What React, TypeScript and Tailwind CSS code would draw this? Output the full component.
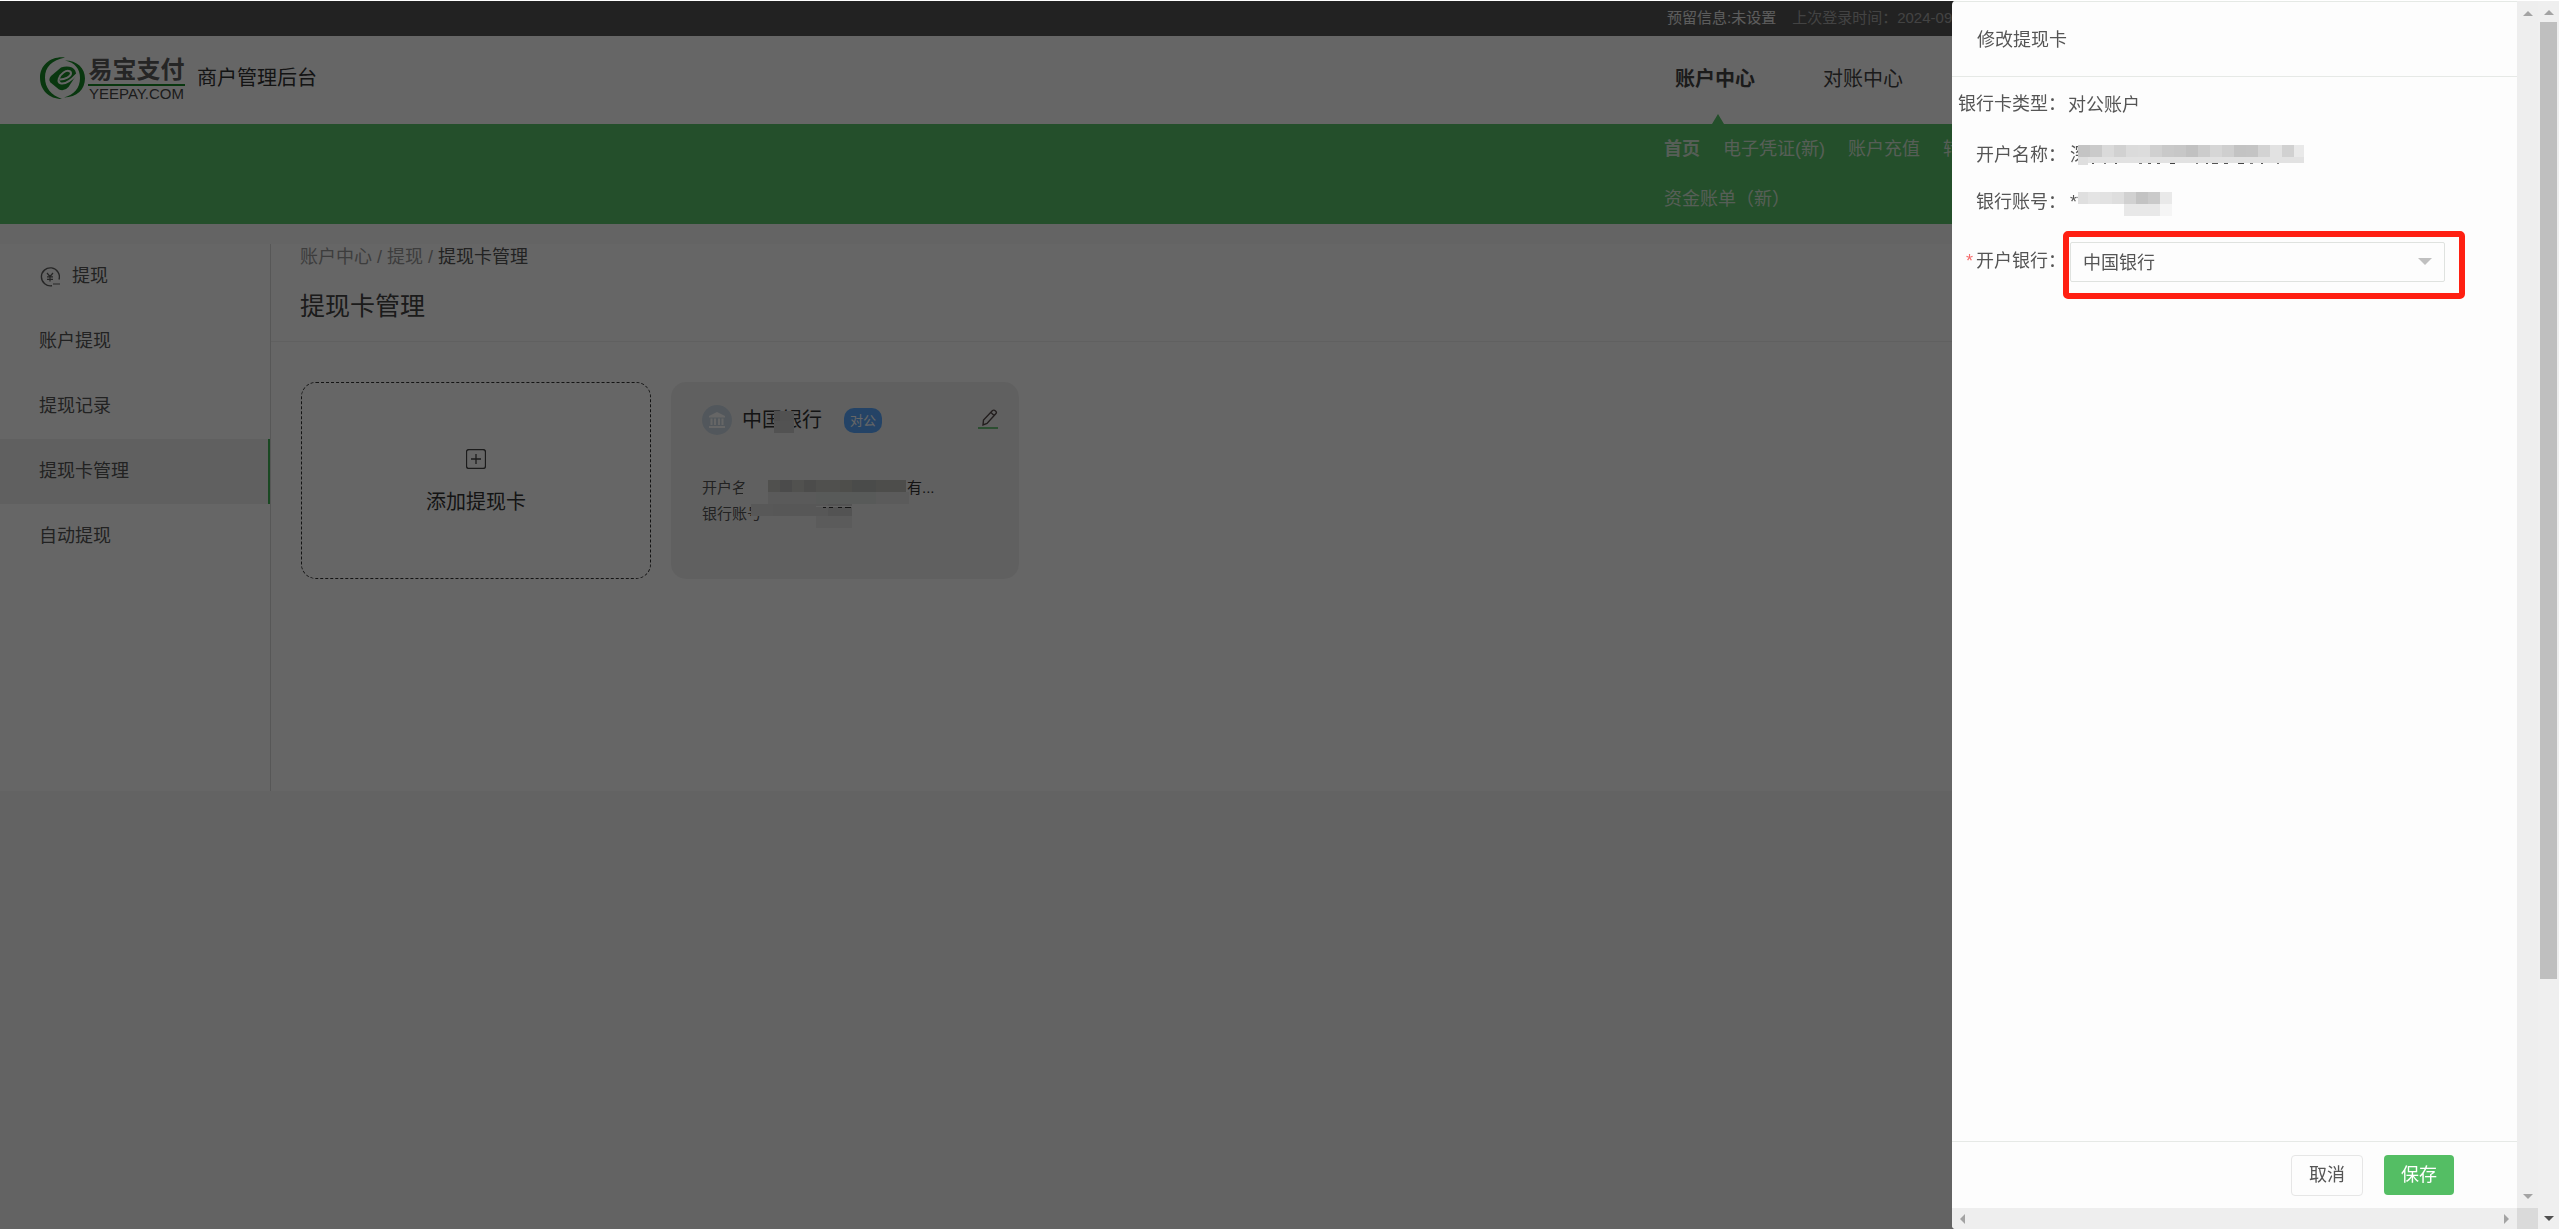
import { FC, ReactNode, useState } from "react";

type Cell = [x: number, y: number, w: number, h: number, fill: string];

const topNav = ["账户中心", "对账中心"];
const subNav = [["首页", "电子凭证(新)", "账户充值", "转"], ["资金账单（新）"]];
const sideNav = ["账户提现", "提现记录", "提现卡管理", "自动提现"];

const nameCells: Cell[] = [
  "#c4c4c4", "#cacaca", "#dadada", "#d1d1d1", "#dbdbdb", "#dcdcdc", "#d0d0d0", "#c9c9c9", "#c7c7c7", "#c1c1c1",
  "#cccccc", "#d6d6d6", "#cfcfcf", "#c3c3c3", "#c4c4c4", "#d3d3d3", "#e2e2e2", "#d1d1d1", "#e9e9e9",
].map((fill, i) => [i * 12, 0, 12, 12, fill]);

const nameShade: Cell[] = [
  [0, 12, 10, 8, "#dedede"], [10, 12, 216, 6, "#e2e2e2"],
  [14, 18, 2, 1, "#555"], [26, 18, 2, 1, "#777"], [37, 18, 2, 1, "#555"], [61, 18, 3, 1, "#777"],
  [70, 18, 3, 1, "#555"], [79, 18, 3, 1, "#555"], [92, 18, 5, 1, "#444"], [118, 18, 2, 1, "#777"],
  [128, 18, 2, 1, "#555"], [134, 18, 6, 1, "#555"], [146, 18, 4, 1, "#555"], [160, 18, 6, 1, "#444"],
  [172, 18, 3, 1, "#777"], [183, 18, 2, 1, "#555"], [199, 18, 2, 1, "#777"],
];

const accountCells: Cell[] = [
  ["#dfdfdf", 0], ["#e4e4e4", 10], ["#e2e2e2", 22], ["#dedede", 34], ["#d1d1d1", 46], ["#c3c3c3", 58], ["#cacaca", 70], ["#e9e9e9", 82],
].map(([fill, x]) => [x as number, 0, x === 0 ? 10 : 12, 12, fill as string]);

const accountShade: Cell[] = [
  [46, 12, 36, 12, "#e8e8e8"],
  [82, 12, 12, 12, "#f5f5f5"],
];

const cardCells: Cell[] = [
  [0, 6, 25, 18, "#f0f1f1"], [25, 0, 12, 12, "#c9c9c2"], [37, 0, 12, 12, "#bcbcbc"], [49, 0, 12, 12, "#cbcbc5"],
  [61, 0, 12, 12, "#bfbfbc"], [73, 0, 24, 12, "#c9c9c2"], [97, 0, 12, 12, "#c2c2bc"], [109, 0, 24, 12, "#babcba"],
  [133, 0, 30, 12, "#c0c0bc"], [25, 12, 48, 12, "#e2e2e2"], [73, 12, 60, 12, "#dde0de"], [133, 12, 33, 12, "#e3e3e3"],
  [8, 24, 22, 12, "#dcdcdc"], [30, 24, 60, 12, "#d9d9d9"], [85, 24, 24, 12, "#d0d0d0"], [73, 36, 36, 12, "#e4e4e4"],
  [73, 26, 36, 1, "#f2f2f2"], [80, 27, 3, 1, "#333"], [86, 27, 4, 1, "#333"], [95, 27, 4, 1, "#333"], [102, 27, 6, 1, "#333"],
];

const Mosaic: FC<{ cells: Cell[]; width: number; height: number; className: string }> = ({ cells, width, height, className }) => (
  <svg width={width} height={height} className={`absolute ${className}`} shapeRendering="crispEdges" aria-hidden>
    {cells.map(([x, y, w, h, fill], i) => (
      <rect key={i} x={x} y={y} width={w} height={h} fill={fill} />
    ))}
  </svg>
);

const Logo = () => (
  <div className="flex items-center gap-[3px]">
    <svg width="45" height="42" viewBox="0 0 45 42" aria-hidden>
      <path d="M25 0.5C11 -1 0 8 0 20.5C0 33 9 42 22 42C11 38 5 31 5 20.5C5 10 12 3 25 0.5Z" fill="#178a26" />
      <path d="M25 3.5C35 5.5 40 12 40 21C40 31 34 38 24 40.5C37 40.5 45 32 45 21.5C45 11 37 3.5 25 3.5Z" fill="#178a26" />
      <path d="M21 10.500Q27 8.500 32 10.500Q36.500 13 36 18.500L28.500 30Q24 35 19 32.500L10.500 25.500Q8 22.500 11 19Z" fill="#178a26" />
      <path d="M20 22.500C25 22.500 31 19.500 31 16.200C31 13.500 27 13 23.500 15.500C18.500 19 17 25 20.500 26.300C24.500 27.500 30 24.500 36.500 17.500" fill="none" stroke="#fff" strokeWidth="2" />
    </svg>
    <div className="flex w-[97px] flex-col">
      <span className="whitespace-nowrap text-center text-[24px] font-bold leading-[28px] text-[#5c5c5c]">易宝支付</span>
      <span className="h-[2px] bg-[#178a26]" />
      <span className="text-center text-[15px] leading-[15px] text-[#484848]">YEEPAY.COM</span>
    </div>
  </div>
);

const WithdrawIcon = () => (
  <svg width="20" height="20" viewBox="0 0 20 20" fill="none" stroke="#606060" strokeWidth="1.400" aria-hidden>
    <path d="M12 18.700A9 9 0 1 1 19 12.500" />
    <path d="M13 17H20M7 6L10 9.500L13 6M10 9.500V14.500M7 9.800H13M7 12.300H13" strokeWidth="1.200" />
  </svg>
);

const Triangle: FC<{ points: string; width: number; height: number; fill?: string }> = ({ points, width, height, fill = "#a3a3a3" }) => (
  <svg width={width} height={height} aria-hidden>
    <polygon points={points} fill={fill} />
  </svg>
);

const up = "5,0 10,5 0,5";
const down = "0,0 10,0 5,5";

const Page = () => (
  <div className="min-h-screen bg-[#f7f7f7]">
    <div className="h-px bg-white" />
    <div className="flex h-[35px] items-center justify-end bg-[#565656] text-[15px]">
      <div className="flex w-[892px] gap-4 whitespace-nowrap">
        <span className="text-[#e8e8e8]">预留信息:未设置</span>
        <span className="text-[#a8a8a8]">上次登录时间：2024-09</span>
      </div>
    </div>
    <header className="flex h-[88px] items-center justify-between bg-white pl-10">
      <div className="flex items-center gap-3 pb-1">
        <Logo />
        <span className="text-[20px] text-[#333]">商户管理后台</span>
      </div>
      <nav className="flex h-full w-[884px] gap-[68px] text-[20px] text-[#444]">
        {topNav.map((item, i) => (
          <a key={item} href="#" className="relative flex items-center pb-[2px]">
            <span className={i === 0 ? "font-bold" : ""}>{item}</span>
            {i === 0 && (
              <span className="absolute bottom-0 left-[37px] flex">
                <Triangle points="6,0 12,10 0,10" width={12} height={10} fill="#5ac56b" />
              </span>
            )}
          </a>
        ))}
      </nav>
    </header>
    <div className="flex h-[100px] justify-end bg-[#5ac56b]">
      <nav className="w-[895px] text-[18px] text-[#d8ecd9]">
        {subNav.map((row, i) => (
          <div key={i} className="flex h-[50px] items-center gap-[23px] whitespace-nowrap">
            {row.map((item) => (
              <a key={item} href="#" className={item === "首页" ? "font-bold" : ""}>
                {item}
              </a>
            ))}
          </div>
        ))}
      </nav>
    </div>
    <div className="h-5 bg-[#fbfbfb]" />
    <div className="flex min-h-[547px] bg-white">
      <aside className="w-[271px] shrink-0 border-r border-[#d9d9d9] text-[18px] text-[#555]">
        <div className="flex h-[65px] items-center gap-3 pl-10">
          <WithdrawIcon />
          <span>提现</span>
        </div>
        {sideNav.map((item) => (
          <a key={item} href="#" className={`flex h-[65px] items-center pl-[39px] ${item === "提现卡管理" ? "border-r-2 border-[#3fb455] bg-[#f0f0f0]" : ""}`}>
            {item}
          </a>
        ))}
      </aside>
      <main className="grow">
        <div className="flex h-[98px] flex-col gap-[18px] border-b border-[#f0f0f0] pl-[29px]">
          <div className="text-[18px] leading-[26px] text-[#999]">
            账户中心 / 提现 / <span className="text-[#555]">提现卡管理</span>
          </div>
          <h1 className="text-[25px] leading-[36px] text-[#444]">提现卡管理</h1>
        </div>
        <div className="flex gap-5 pl-[30px] pt-10">
          <button className="flex h-[197px] w-[350px] flex-col items-center justify-center gap-[18px] rounded-[15px] border border-dashed border-[#333] pt-1 text-[20px] text-[#333]">
            <svg width="20" height="20" viewBox="0 0 20 20" fill="none" stroke="#444" aria-hidden>
              <rect x="0.500" y="0.500" width="19" height="19" rx="2.500" strokeWidth="1.300" />
              <path d="M10 5V15M5 10H15" strokeWidth="1.300" />
            </svg>
            <span>添加提现卡</span>
          </button>
          <section className="h-[197px] w-[348px] rounded-[15px] bg-[#f1f1f1] pl-[31px] pr-[21px] pt-[23px] text-[#333]">
            <div className="flex items-center">
              <svg width="30" height="30" viewBox="0 0 30 30" aria-hidden>
                <circle cx="15" cy="15" r="15" fill="#cddae5" />
                <path d="M15 7L23 11V12.500H7V11ZM8.500 13.500H10.500V20H8.500ZM12 13.500H14V20H12ZM16 13.500H18V20H16ZM19.500 13.500H21.500V20H19.500ZM7 21H23V23H7Z" fill="#fff" />
              </svg>
              <span className="relative ml-[10px] text-[20px]">
                中国银行
                <Mosaic cells={[[0, 0, 6, 10, "#c3c3c3"], [6, 0, 14, 10, "#cbcbcb"], [0, 10, 20, 12, "#cccccc"]]} width={20} height={22} className="left-[32px] top-[6px]" />
              </span>
              <span className="ml-[22px] rounded-[10px] bg-[#5aa9ff] px-[6px] text-[13px] leading-[25px] text-white">对公</span>
              <button className="ml-auto pb-[2px]" aria-label="编辑">
                <svg width="20" height="20" viewBox="0 0 20 20" fill="none" aria-hidden>
                  <path d="M5 16L5.500 11L14.500 1.500Q16 0.500 17.500 2T18 4.500L9 14.500ZM13 3.500L16 6.500" stroke="#554a4a" strokeWidth="1.400" />
                  <path d="M0 19H20" stroke="#6fc47c" strokeWidth="2" />
                </svg>
              </button>
            </div>
            <div className="relative mt-10 text-[15px] leading-[26px] text-[#555]">
              <div className="flex gap-[160px]">
                <span>开户名</span>
                <span className="text-[#333]">有...</span>
              </div>
              <div>银行账号</div>
              <Mosaic cells={cardCells} width={166} height={48} className="left-[41px] top-[5px]" />
            </div>
          </section>
        </div>
      </main>
    </div>
  </div>
);

const Row: FC<{ label: string; className: string; children: ReactNode }> = ({ label, className, children }) => (
  <div className={`flex items-center gap-[2px] ${className}`}>
    <span className="w-[114px] shrink-0 whitespace-nowrap text-right">{label}</span>
    {children}
  </div>
);

const EditCardDrawer = () => {
  const [bank, setBank] = useState("中国银行");

  return (
    <div className="flex w-[586px] shrink-0 flex-col overflow-hidden rounded-l-[4px] bg-[#fdfdfd] text-[18px] text-[#555]">
      <div className="flex grow">
        <div className="flex grow flex-col border-t border-[#e5e9e5]">
          <h2 className="flex h-[75px] items-center border-b border-[#e6e9e6] pl-[25px] pt-[2px]">修改提现卡</h2>
          <div className="grow">
            <Row label="银行卡类型：" className="h-[54px]">
              <span className="pt-[2px]">对公账户</span>
            </Row>
            <Row label="开户名称：" className="h-12">
              <span className="relative pl-[2px]">
                深
                <Mosaic cells={[...nameCells, ...nameShade]} width={226} height={20} className="left-[10px] top-[3px]" />
              </span>
            </Row>
            <Row label="银行账号：" className="h-[47px]">
              <span className="relative pl-[2px]">
                **
                <Mosaic cells={[...accountCells, ...accountShade]} width={94} height={24} className="left-[10px] top-[3px]" />
              </span>
            </Row>
            <div className="mr-[52px] mt-[5px] flex">
              <label htmlFor="bank" className="-mr-[3px] w-[114px] shrink-0 whitespace-nowrap pt-[17px] text-right">
                <span className="mr-[3px] text-[18px] text-[#f56c6c]">*</span>开户银行：
              </label>
              <div className="grow rounded-[5px] border-[6px] border-[#ff2012] pb-[11px] pl-px pr-[14px] pt-[5px]">
                <div className="relative">
                  <select id="bank" value={bank} onChange={(e) => setBank(e.target.value)} className="h-10 w-full appearance-none rounded-[2px] border border-[#dfe2df] pl-3 pt-[2px]">
                    <option>中国银行</option>
                  </select>
                  <span className="pointer-events-none absolute right-[13px] top-4">
                    <Triangle points="0,0 14,0 7,7" width={14} height={7} fill="#c0c0c0" />
                  </span>
                </div>
              </div>
            </div>
          </div>
          <div className="flex h-[67px] items-center justify-end gap-[21px] border-t border-[#e6e9e6] pr-[63px]">
            <button className="h-[41px] w-[72px] rounded-[4px] border border-[#e6e6e6] pt-px">取消</button>
            <button className="h-10 w-[70px] rounded-[4px] bg-[#54be64] pt-px text-white">保存</button>
          </div>
        </div>
        <div className="flex w-[21px] flex-col items-center justify-between bg-[#eeeeee] pb-[9px] pt-[10px]">
          <Triangle points={up} width={10} height={5} />
          <Triangle points={down} width={10} height={5} />
        </div>
      </div>
      <div className="flex h-[21px] bg-[#eeeeee]">
        <div className="flex grow items-center justify-between px-2">
          <Triangle points="5,0 5,10 0,5" width={5} height={10} />
          <Triangle points="0,0 5,5 0,10" width={5} height={10} />
        </div>
        <div className="w-[21px] bg-[#dadada]" />
      </div>
    </div>
  );
};

export default function App() {
  return (
    <div className="font-['Liberation_Sans','Noto_Sans_CJK_SC',sans-serif]">
      <Page />
      <div className="fixed inset-x-0 bottom-0 top-px flex">
        <div className="absolute inset-0 bg-black/60" />
        <div className="relative flex grow justify-end">
          <EditCardDrawer />
          <div className="flex w-[21px] shrink-0 flex-col items-center bg-[#efefef] pb-2 pt-[9px]">
            <Triangle points={up} width={10} height={5} />
            <div className="mt-[7px] h-[79%] w-[17px] bg-[#bfbfbf]" />
            <span className="mt-auto">
              <Triangle points={down} width={10} height={5} fill="#505050" />
            </span>
          </div>
        </div>
      </div>
    </div>
  );
}
